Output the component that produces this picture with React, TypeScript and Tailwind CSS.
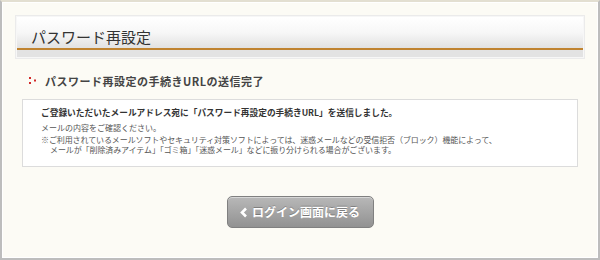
const jp = "font-['Noto_Sans_CJK_JP','Noto_Sans',sans-serif]";

function Dots() {
  return (
    <svg width="8" height="10" viewBox="0 0 8 10" className="shrink-0">
      <rect x="0" y="1" width="2" height="2" fill="#d22a2a" />
      <rect x="0" y="6" width="2" height="2" fill="#d22a2a" />
      <rect x="5" y="3.5" width="2" height="2" fill="#d22a2a" />
    </svg>
  );
}

function Chevron() {
  return (
    <svg width="8" height="11" viewBox="0 0 8 11" className="shrink-0">
      <path d="M6 1.5 L2 5.5 L6 9.5" fill="none" stroke="#fff" strokeWidth="2.6" strokeLinejoin="miter" />
    </svg>
  );
}

export default function App() {
  return (
    <div className={`${jp} w-[600px] h-[260px] bg-[#fcfbf5] border-2 border-t-[#e3dfd1] border-l-[#bdbdbd] border-r-[#bdbdbd] border-b-[#bdbdbd]`}>
      <div className="h-full border border-white pt-[12px] px-[12px]">
        {/* Title */}
        <div className="border border-[#ebebeb] p-px bg-[#f7f7f7]">
          <div className="h-[31px] bg-gradient-to-b from-white via-[#f7f7f7] to-[#e2e2e2] flex items-center pl-[14px] pt-[7px]">
            <h1 className="text-[15px] text-[#333] leading-none">パスワード再設定</h1>
          </div>
          <div className="h-[2px] bg-[#c08431]" />
          <div className="h-[7px] bg-[#e3e3e3]" />
        </div>

        {/* Heading */}
        <div className="flex items-center gap-[8px] pl-[14px] mt-[15px] h-[14px]">
          <Dots />
          <h2 className="text-[11px] font-bold tracking-[0.5px] text-[#444] leading-none">
            パスワード再設定の手続きURLの送信完了
          </h2>
        </div>

        {/* Message */}
        <div className="mx-[7px] mt-[11px] bg-white border border-[#dcdcdc] pt-[7px] pb-[11px] px-[18px] text-[#555]">
          <p className="text-[8.7px] font-bold text-[#333] leading-[12px] mb-[3px]">
            ご登録いただいたメールアドレス宛に「パスワード再設定の手続きURL」を送信しました。
          </p>
          <p className="text-[8px] leading-[12px] mb-px">メールの内容をご確認ください。</p>
          <p className="text-[8px] leading-[10px] pl-[9px] -indent-[9px] tracking-[-0.1px]">
            ※ご利用されているメールソフトやセキュリティ対策ソフトによっては、迷惑メールなどの受信拒否（ブロック）機能によって、
            <br />
            メールが「削除済みアイテム」「ゴミ箱」「迷惑メール」などに振り分けられる場合がございます。
          </p>
        </div>

        {/* Button */}
        <div className="flex justify-center mt-[29px]">
          <button className="w-[147px] h-[32px] rounded-[5px] border border-[#808080] bg-gradient-to-b from-[#b8b8b8] to-[#929292] shadow-[inset_0_1px_0_rgba(255,255,255,0.45)] flex items-center justify-center gap-[4px] text-white text-[12px] font-bold [text-shadow:0_-1px_0_rgba(0,0,0,0.25)]">
            <Chevron />
            ログイン画面に戻る
          </button>
        </div>
      </div>
    </div>
  );
}
